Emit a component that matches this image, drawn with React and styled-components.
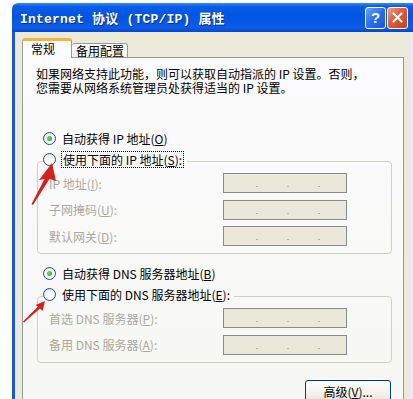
import React from 'react';
import styled, { createGlobalStyle } from 'styled-components';

const GlobalStyle = createGlobalStyle`
  html, body {
    margin: 0;
    padding: 0;
    background: #fff;
  }
  body {
    font-family: "Noto Sans CJK SC", "Liberation Sans", sans-serif;
    font-size: 12px;
    color: #000;
  }
  * {
    box-sizing: border-box;
  }
`;

const ipFields = [
  { label: 'IP 地址', key: 'I' },
  { label: '子网掩码', key: 'U' },
  { label: '默认网关', key: 'D' },
];

const dnsFields = [
  { label: '首选 DNS 服务器', key: 'P' },
  { label: '备用 DNS 服务器', key: 'A' },
];

const Radio = ({ checked }) => (
  <RadioCircle>{checked && <RadioDot />}</RadioCircle>
);

const IpBox = () => (
  <IpInput>
    <Dot />
    <Dot />
    <Dot />
  </IpInput>
);

const App = () => {
  return (
    <Page>
      <GlobalStyle />
      <Window>
        <TitleBar>
          <Title>Internet 协议 (TCP/IP) 属性</Title>
          <TitleButtons>
            <HelpButton>?</HelpButton>
            <CloseButton>
              <svg width="11" height="11" viewBox="0 0 11 11">
                <path d="M1.5 1.5 L9.5 9.5 M9.5 1.5 L1.5 9.5" stroke="#fff" strokeWidth="2.2" strokeLinecap="round" />
              </svg>
            </CloseButton>
          </TitleButtons>
        </TitleBar>
        <Body>
          <TabRow>
            <Tab active>常规</Tab>
            <Tab>备用配置</Tab>
          </TabRow>
          <Panel>
            <Intro>
              <IntroLine>如果网络支持此功能，则可以获取自动指派的 IP 设置。否则，</IntroLine>
              <IntroLine>您需要从网络系统管理员处获得适当的 IP 设置。</IntroLine>
            </Intro>

            <RadioRow $gap={34}>
              <Radio checked />
              <span>自动获得 IP 地址(<u>O</u>)</span>
            </RadioRow>
            <Group>
              <Legend>
                <Radio />
                <Focused>使用下面的 IP 地址(<u>S</u>):</Focused>
              </Legend>
              {ipFields.map((f) => (
                <FieldRow key={f.key}>
                  <FieldLabel>
                    {f.label}(<u>{f.key}</u>):
                  </FieldLabel>
                  <IpBox />
                </FieldRow>
              ))}
            </Group>

            <RadioRow $gap={10}>
              <Radio checked />
              <span>自动获得 DNS 服务器地址(<u>B</u>)</span>
            </RadioRow>
            <Group>
              <Legend>
                <Radio />
                <span>使用下面的 DNS 服务器地址(<u>E</u>):</span>
              </Legend>
              {dnsFields.map((f) => (
                <FieldRow key={f.key}>
                  <FieldLabel>
                    {f.label}(<u>{f.key}</u>):
                  </FieldLabel>
                  <IpBox />
                </FieldRow>
              ))}
            </Group>

            <ButtonRow>
              <Button>
                高级(<u>V</u>)...
              </Button>
            </ButtonRow>
          </Panel>
        </Body>
      </Window>
      <Arrows width="413" height="399" viewBox="0 0 413 399">
        <polygon points="52,163 56,181 49.5,179 33,205 31.5,204 44.5,179 39,180" fill="#d71f1b" />
        <polygon points="45,301 42.5,311 40,308.5 24,322.5 23,321.5 38,306.5 35.5,305" fill="#d71f1b" />
      </Arrows>
    </Page>
  );
};

const Page = styled.div`
  position: relative;
  width: 413px;
  height: 399px;
  overflow: hidden;
  padding: 3px 0 0 12px;
`;

const Window = styled.div`
  display: flex;
  flex-direction: column;
  width: 401px;
  height: 420px;
`;

const TitleBar = styled.div`
  display: flex;
  align-items: center;
  justify-content: space-between;
  height: 29px;
  padding: 0 5px 0 8px;
  border-radius: 6px 0 0 0;
  background: linear-gradient(
    to bottom,
    #3a8cf6 0%,
    #0b5de9 12%,
    #0055e3 45%,
    #0a5ce9 85%,
    #0747c9 100%
  );
`;

const Title = styled.div`
  color: #fff;
  font-family: "Liberation Mono", "Noto Sans CJK SC", monospace;
  font-weight: bold;
  font-size: 13px;
  text-shadow: 1px 1px 0 #0b2a8a;
  letter-spacing: 0.2px;
`;

const TitleButtons = styled.div`
  display: flex;
  gap: 1px;
`;

const TitleButton = styled.div`
  display: flex;
  align-items: center;
  justify-content: center;
  width: 21px;
  height: 22px;
  border: 1px solid #fff;
  border-radius: 3px;
  color: #fff;
  font-family: "Liberation Sans", sans-serif;
  font-weight: bold;
  font-size: 15px;
`;

const HelpButton = styled(TitleButton)`
  background: linear-gradient(135deg, #6ea2fa 0%, #2a6ef0 50%, #1c55d8 100%);
`;

const CloseButton = styled(TitleButton)`
  background: linear-gradient(135deg, #f0a08a 0%, #e05a36 45%, #c8411b 100%);
`;

const Body = styled.div`
  display: flex;
  flex-direction: column;
  flex: 1;
  background: #ece9d8;
  border-left: 3px solid #1a56d8;
  border-right: 3px solid #e4ebf6;
  padding: 6px 6px 0 7px;
`;

const TabRow = styled.div`
  display: flex;
  align-items: flex-end;
  height: 20px;
  margin-bottom: -1px;
  position: relative;
  z-index: 1;
`;

const Tab = styled.div`
  height: ${(p) => (p.active ? '20px' : '15px')};
  width: ${(p) => (p.active ? '50px' : '56px')};
  padding-left: ${(p) => (p.active ? '8px' : '4px')};
  line-height: ${(p) => (p.active ? '15px' : '13px')};
  border: 1px solid #919b9c;
  border-top: ${(p) => (p.active ? '3px solid #f5b43b' : '1px solid #919b9c')};
  border-bottom: ${(p) => (p.active ? 'none' : '1px solid #919b9c')};
  border-left: ${(p) => (p.active ? '1px solid #919b9c' : 'none')};
  border-radius: 3px 3px 0 0;
  background: ${(p) =>
    p.active ? '#fcfcfe' : 'linear-gradient(to bottom, #ffffff, #f1f0ea)'};
`;

const Panel = styled.div`
  flex: 1;
  border: 1px solid #919b9c;
  background: linear-gradient(to bottom, #fcfcfe 0%, #f6f6f2 100%);
  padding: 9px 12px 0 13px;
`;

const Intro = styled.div`
  display: flex;
  flex-direction: column;
`;

const IntroLine = styled.div`
  height: 14px;
  line-height: 14px;
  white-space: nowrap;
`;

const RadioRow = styled.div`
  display: flex;
  align-items: center;
  gap: 6px;
  height: 18px;
  padding-left: 7px;
  margin-top: ${(p) => p.$gap || 0}px;
`;

const RadioCircle = styled.span`
  display: flex;
  align-items: center;
  justify-content: center;
  width: 13px;
  height: 13px;
  flex: none;
  border: 1px solid #1c5180;
  border-radius: 50%;
  background: radial-gradient(circle at 65% 65%, #ffffff 30%, #dcdcd4 100%);
`;

const RadioDot = styled.span`
  width: 5px;
  height: 5px;
  border-radius: 50%;
  background: radial-gradient(circle at 35% 35%, #67d867 0%, #21a121 100%);
`;

const Group = styled.fieldset`
  width: 355px;
  margin: 3px 0 0 1px;
  padding: 1px 0 7px 0;
  border: 1px solid #d0d0bf;
  border-radius: 4px;
`;

const Legend = styled.legend`
  display: flex;
  align-items: center;
  gap: 6px;
  height: 22px;
  padding: 0 4px 4px 0;
  margin-left: 5px;
`;

const Focused = styled.span`
  outline: 1px dotted #000;
  outline-offset: 0;
  line-height: 15px;
  padding: 0 1px;
`;

const FieldRow = styled.div`
  display: flex;
  align-items: center;
  height: 20px;
  padding-left: 11px;
  margin-bottom: 6.5px;

  &:last-child {
    margin-bottom: 0;
  }
`;

const FieldLabel = styled.span`
  width: 174px;
  color: #aca899;
`;

const IpInput = styled.div`
  display: flex;
  align-items: flex-end;
  gap: 29px;
  width: 124px;
  height: 20px;
  padding: 0 0 5px 32px;
  border: 1px solid #878c90;
  background: #ebe8da;
`;

const Dot = styled.span`
  width: 2px;
  height: 1px;
  background: #b5b2a3;
`;

const ButtonRow = styled.div`
  display: flex;
  justify-content: flex-end;
  margin-top: 17px;
`;

const Button = styled.div`
  display: flex;
  align-items: center;
  justify-content: center;
  width: 86px;
  height: 23px;
  border: 1px solid #003c74;
  border-radius: 3px;
  background: linear-gradient(to bottom, #ffffff 0%, #f3f2ec 60%, #e3e0d4 100%);
`;

const Arrows = styled.svg`
  position: absolute;
  left: 0;
  top: 0;
  pointer-events: none;
`;

export default App;
